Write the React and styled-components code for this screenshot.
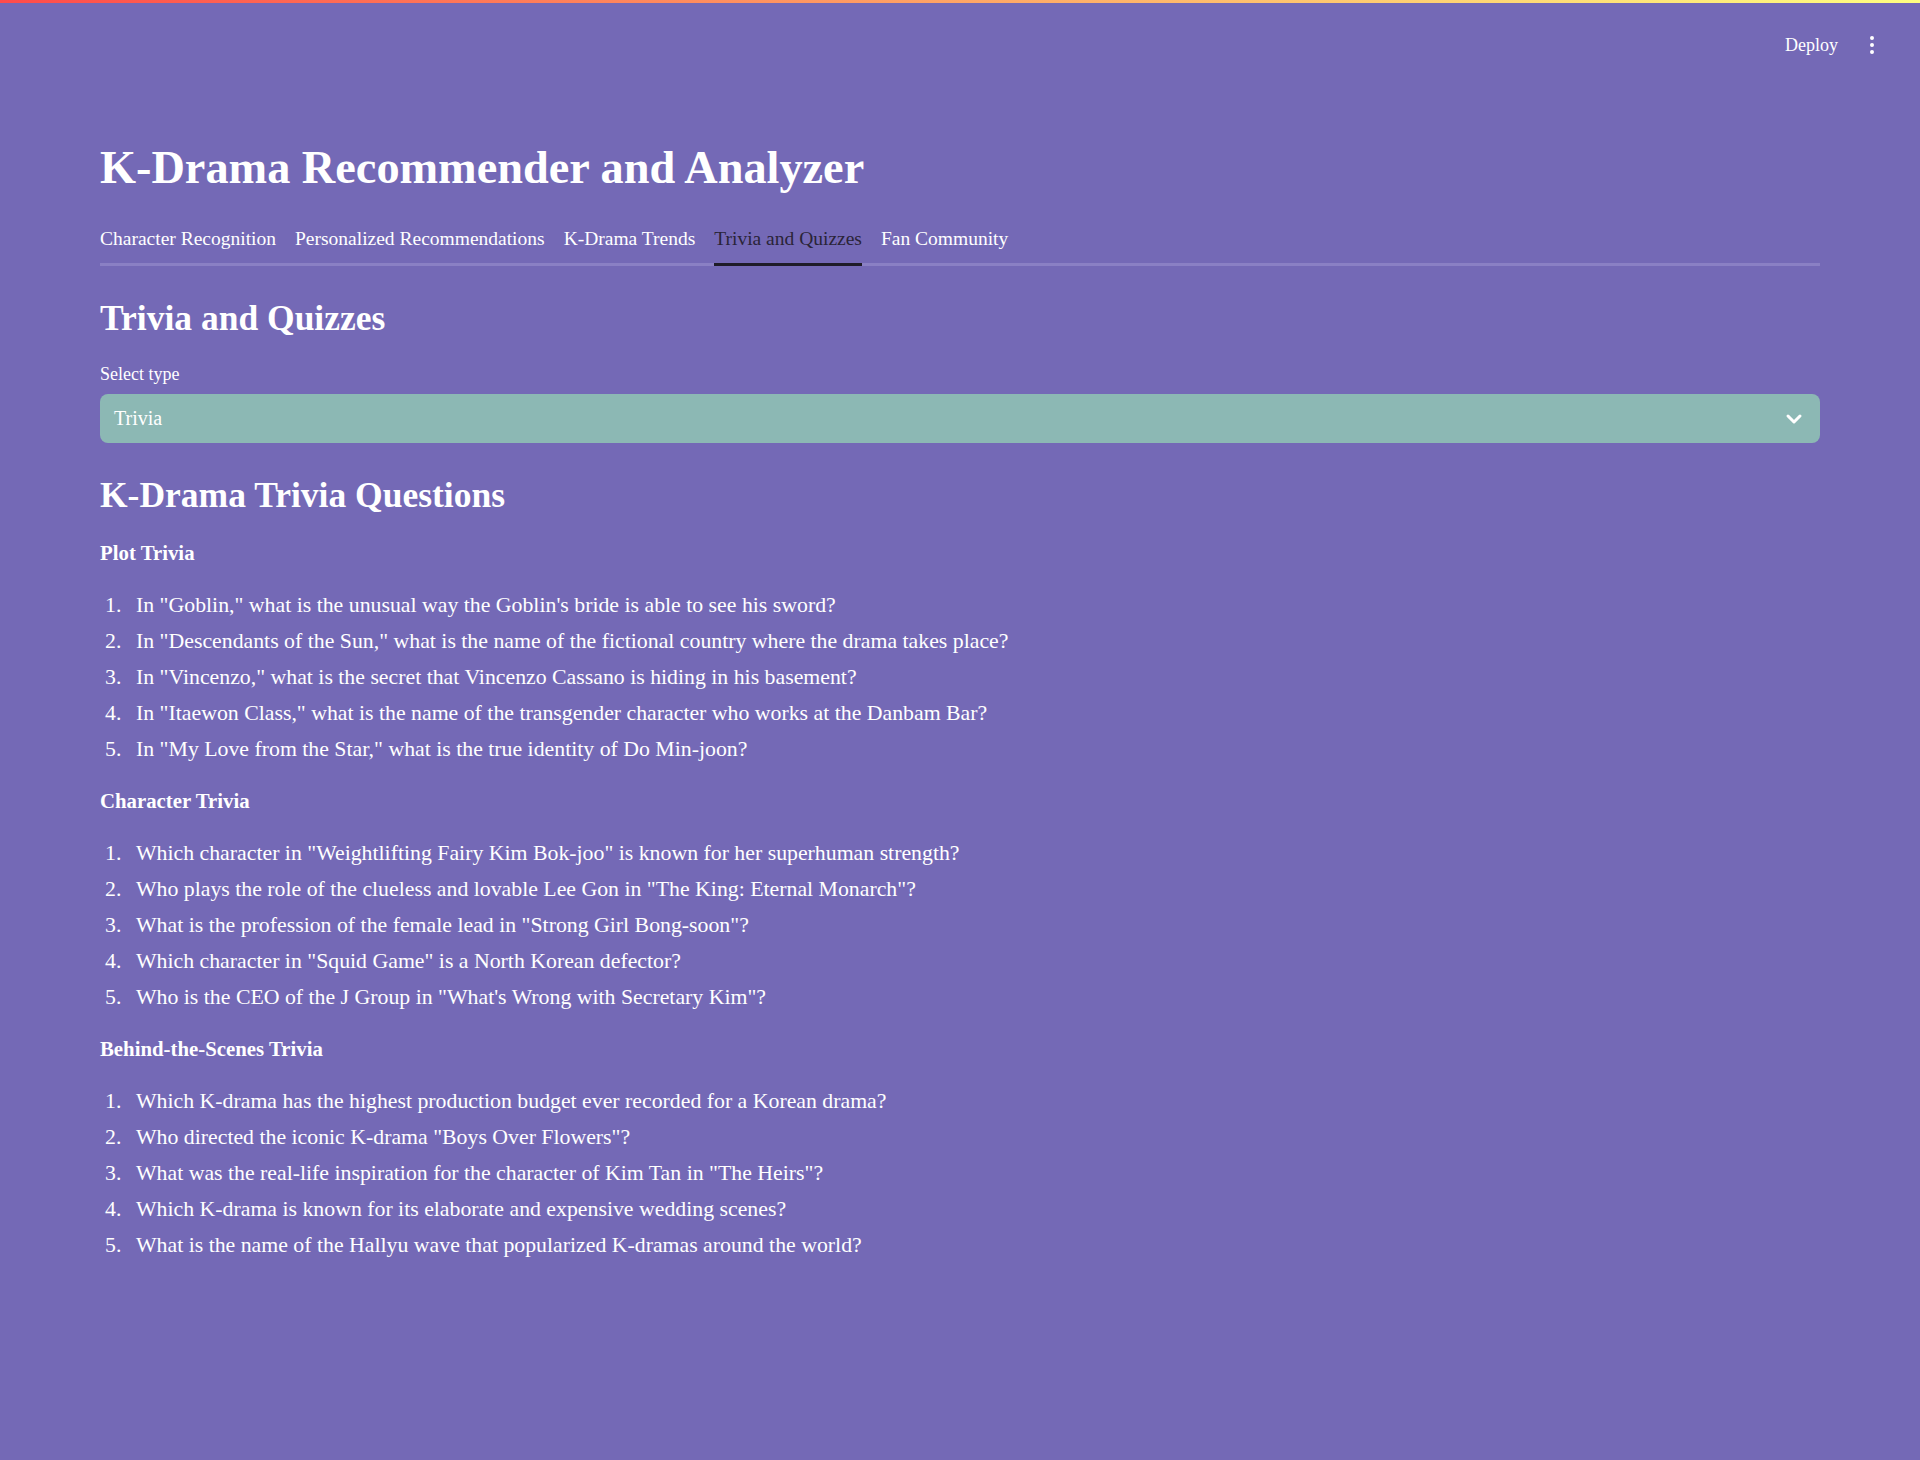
import React, { useState } from 'react';
import styled, { createGlobalStyle } from 'styled-components';
import { ChevronDown, EllipsisVertical } from 'lucide-react';

const GlobalStyle = createGlobalStyle`
	html, body {
		margin: 0;
		padding: 0;
		background: #7469b6;
	}
	body {
		font-family: 'Liberation Serif', 'DejaVu Serif', serif;
		color: #ffffff;
	}
	* {
		box-sizing: border-box;
	}
`;

const tabs = [
	'Character Recognition',
	'Personalized Recommendations',
	'K-Drama Trends',
	'Trivia and Quizzes',
	'Fan Community'
];

const sections = [
	{
		title: 'Plot Trivia',
		items: [
			'In "Goblin," what is the unusual way the Goblin\'s bride is able to see his sword?',
			'In "Descendants of the Sun," what is the name of the fictional country where the drama takes place?',
			'In "Vincenzo," what is the secret that Vincenzo Cassano is hiding in his basement?',
			'In "Itaewon Class," what is the name of the transgender character who works at the Danbam Bar?',
			'In "My Love from the Star," what is the true identity of Do Min-joon?'
		]
	},
	{
		title: 'Character Trivia',
		items: [
			'Which character in "Weightlifting Fairy Kim Bok-joo" is known for her superhuman strength?',
			'Who plays the role of the clueless and lovable Lee Gon in "The King: Eternal Monarch"?',
			'What is the profession of the female lead in "Strong Girl Bong-soon"?',
			'Which character in "Squid Game" is a North Korean defector?',
			'Who is the CEO of the J Group in "What\'s Wrong with Secretary Kim"?'
		]
	},
	{
		title: 'Behind-the-Scenes Trivia',
		items: [
			'Which K-drama has the highest production budget ever recorded for a Korean drama?',
			'Who directed the iconic K-drama "Boys Over Flowers"?',
			'What was the real-life inspiration for the character of Kim Tan in "The Heirs"?',
			'Which K-drama is known for its elaborate and expensive wedding scenes?',
			'What is the name of the Hallyu wave that popularized K-dramas around the world?'
		]
	}
];

const App = () => {
	const [active, setActive] = useState('Trivia and Quizzes');

	return (
		<Page>
			<GlobalStyle />
			<Decoration />
			<Header>
				<DeployButton>Deploy</DeployButton>
				<MenuButton>
					<EllipsisVertical size={24} strokeWidth={2} />
				</MenuButton>
			</Header>
			<Main>
				<Title>K-Drama Recommender and Analyzer</Title>
				<TabList>
					{tabs.map(t => (
						<Tab key={t} $active={t === active} onClick={() => setActive(t)}>
							{t}
						</Tab>
					))}
				</TabList>

				<Heading $top={30}>Trivia and Quizzes</Heading>
				<Label>Select type</Label>
				<Select>
					<span>Trivia</span>
					<ChevronDown size={24} strokeWidth={3} />
				</Select>

				<Heading $top={30}>K-Drama Trivia Questions</Heading>
				{sections.map(s => (
					<div key={s.title}>
						<SubTitle>{s.title}</SubTitle>
						<List>
							{s.items.map((q, i) => (
								<Item key={i}>
									<Num>{i + 1}.</Num>
									<span>{q}</span>
								</Item>
							))}
						</List>
					</div>
				))}
			</Main>
		</Page>
	);
};

export default App;

const Page = styled.div`
	min-height: 1460px;
	background: #7469b6;
`;

const Decoration = styled.div`
	height: 3px;
	background-image: linear-gradient(90deg, #ff4b4b, #ffff80);
`;

const Header = styled.header`
	height: 84px;
	display: flex;
	align-items: center;
	justify-content: flex-end;
	padding-right: 36px;
	gap: 22px;
`;

const DeployButton = styled.button`
	all: unset;
	font-family: 'Liberation Serif', 'DejaVu Serif', serif;
	font-size: 18px;
	color: #ffffff;
	cursor: pointer;
`;

const MenuButton = styled.button`
	all: unset;
	display: flex;
	color: #ffffff;
	cursor: pointer;
`;

const Main = styled.main`
	padding: 54px 100px 60px;
`;

const Title = styled.h1`
	margin: 0;
	font-size: 46.3px;
	line-height: 54px;
	font-weight: 700;
`;

const TabList = styled.div`
	display: flex;
	gap: 19px;
	margin-top: 32px;
	border-bottom: 3px solid #8a80c4;
`;

const Tab = styled.button`
	all: unset;
	font-family: 'Liberation Serif', 'DejaVu Serif', serif;
	font-size: 19.5px;
	line-height: 24px;
	padding-bottom: 12px;
	margin-bottom: -3px;
	cursor: pointer;
	color: ${p => (p.$active ? '#2a2438' : '#ffffff')};
	border-bottom: 3px solid ${p => (p.$active ? '#1f1c28' : 'transparent')};
`;

const Heading = styled.h2`
	margin: ${p => p.$top}px 0 0;
	font-size: 35.5px;
	line-height: 44px;
	font-weight: 700;
`;

const Label = styled.div`
	margin-top: 22px;
	font-size: 18px;
	line-height: 24px;
`;

const Select = styled.div`
	margin-top: 8px;
	height: 49px;
	display: flex;
	align-items: center;
	justify-content: space-between;
	padding: 0 14px 0 14px;
	background: #8cb8b4;
	border-radius: 8px;
	font-size: 20px;
	color: #ffffff;
`;

const SubTitle = styled.div`
	margin-top: 20px;
	font-size: 20.8px;
	line-height: 32px;
	font-weight: 700;
`;

const List = styled.ol`
	list-style: none;
	margin: 20px 0 0;
	padding: 0;
	display: flex;
	flex-direction: column;
	gap: 4px;
`;

const Item = styled.li`
	display: grid;
	grid-template-columns: 31px 1fr;
	padding-left: 5px;
	font-size: 21.8px;
	line-height: 32px;
`;

const Num = styled.span`
	text-align: left;
`;
